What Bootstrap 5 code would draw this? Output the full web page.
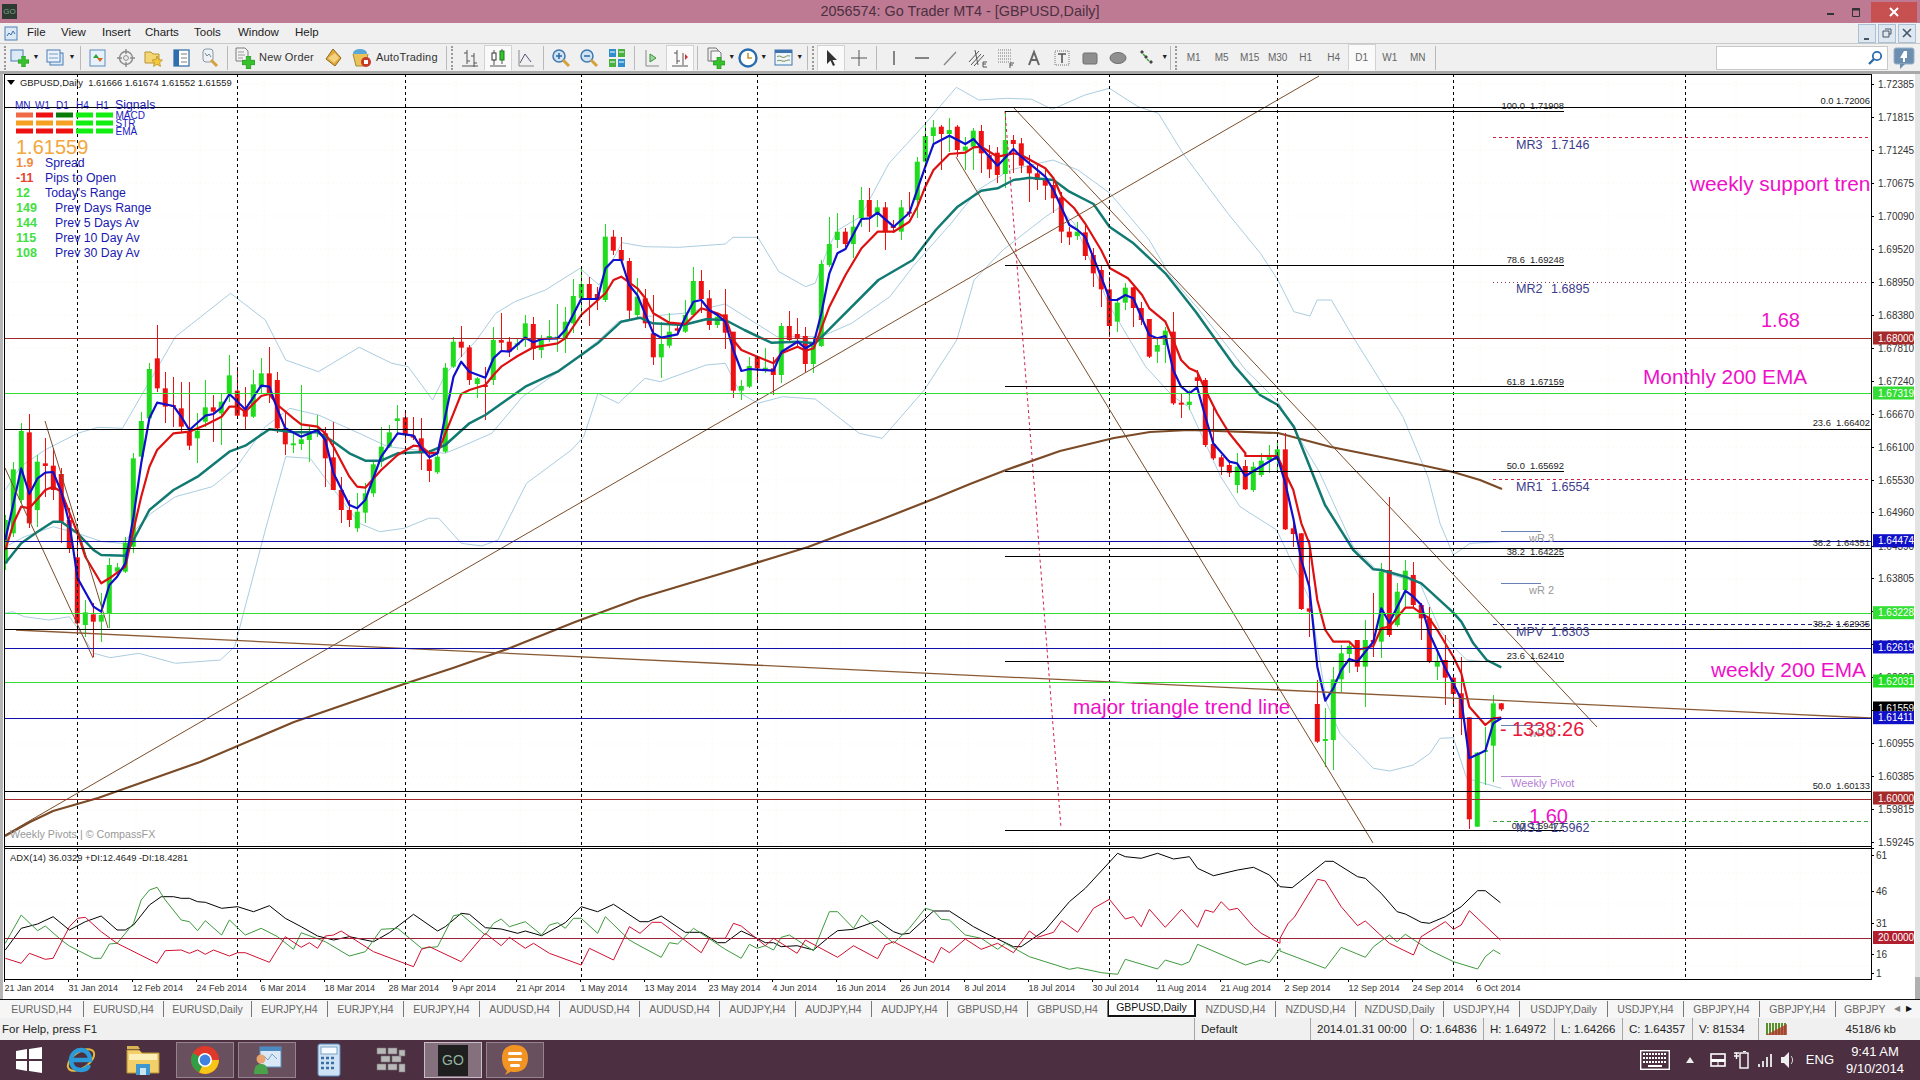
<!DOCTYPE html>
<html lang="en">
<head>
<meta charset="UTF-8">
<title>2056574: Go Trader MT4 - [GBPUSD,Daily]</title>
<link rel="stylesheet" href="https://cdn.jsdelivr.net/npm/bootstrap@5.3.0/dist/css/bootstrap.min.css">
<style>
body { width: 1920px; height: 1080px; overflow: hidden; font-family: "Liberation Sans", Arial, sans-serif; background: #f0f0f0; }
.titlebar { height: 23px; background: #bf7a93; color: #4a3040; font-size: 14.4px; }
.title-txt { padding-left: 84px; }
.app-ico { width: 15px; height: 15px; background: #2c3a32; color: #7fa08c; font-size: 8px; line-height: 15px; margin-left: 2px; }
.win-btn { width: 24px; height: 20px; }
.win-close { width: 46px; height: 20px; background: #c75050; margin: 0 3px 0 4px; }
.menubar { height: 21px; font-size: 11.5px; color: #222; background: #f0f0f0; border-bottom: 1px solid #c9c9c9; }
.m1 { width: 34px; } .m2 { width: 41px; } .m3 { width: 43px; } .m4 { width: 49px; } .m5 { width: 44px; } .m6 { width: 57px; }
.doc-btn { width: 18px; height: 19px; border: 1px solid #a9c0d6; background: #dfe8f0; margin-left: 2px; }
.toolbar { height: 30px; background: #f0f0f0; border-bottom: 3px solid #a8a8a8; font-size: 11px; color: #333; }
.tb { flex: 0 0 28px; height: 26px; }
.tb-on { background: #fafafa; border: 1px solid #d2d2d2; border-bottom-color: #fafafa; }
.ic22 { flex: 0 0 22px; height: 26px; }
.cr { flex: 0 0 10px; height: 26px; font-size: 7px; color: #222; }
.ml3 { margin-left: 3px; }
.mr1n { margin-right: -1px; }
.mr3n { margin-right: -3px; }
.sep { flex: 0 0 1px; height: 24px; background: #b9b9b9; margin: 0 3px; }
.grip { flex: 0 0 4px; height: 24px; margin: 0 1px; border-left: 2px dotted #9a9a9a; }
.tf { flex: 0 0 28px; font-size: 10px; color: #666; }
.tb-txt { flex: 0 0 auto; letter-spacing: .2px; }
.searchbox { width: 172px; height: 24px; background: #fff; border: 1px solid #c8c8c8; }
#chart { background: #fff; }
#chart text { white-space: pre; dominant-baseline: central; }
.lbl { font-size: 9.4px; fill: #222; }
.hdr { font-size: 9.4px; fill: #222; }
.axis { font-size: 10px; fill: #333; }
.dt { font-size: 9px; fill: #333; }
.tag { font-size: 10px; fill: #fff; }
.piv { font-size: 12.6px; fill: #3c3c8c; }
.wr { font-size: 11px; fill: #999; }
.wp { font-size: 10.7px; fill: #999; }
.plum { font-size: 11px; fill: #b57fd6; }
.pink { font-size: 20px; fill: #ee10c8; }
.pink-lg { font-size: 20.8px; fill: #ee10c8; }
.timer { font-size: 20px; fill: #e8193c; }
.price { font-size: 20px; fill: #f2a63c; }
.sig { font-size: 10px; fill: #1a1ac0; }
.info { font-size: 12.3px; fill: #1a1ab0; }
.num { font-size: 12.5px; font-weight: 700; }
.tabs { height: 19px; background: #f6f6f6; border-top: 1px solid #111; font-size: 10.5px; color: #666; overflow: hidden; }
.tab { height: 16px; line-height: 16px; margin-top: 1px; border-right: 1px solid #777; text-align: center; flex: 0 0 auto; }
.w76 { width: 76px; } .w80 { width: 80px; } .w88 { width: 88px; } .w84 { width: 84px; }
.tab-on { background: #fff; color: #111; height: 18px; line-height: 16px; margin-top: -1px; border: 1px solid #111; border-top: 0; border-bottom-width: 2px; border-right-width: 2px; }
.tab-more { width: 32px; font-size: 8px; color: #111; }
.statusbar { height: 22px; font-size: 11.5px; color: #222; background: #f0f0f0; }
.st { height: 22px; line-height: 22px; border-left: 1px solid #a5a5a5; padding-left: 6px; flex: 0 0 auto; }
.st-help { width: 1194px; padding-left: 2px; }
.s116 { width: 116px; } .s103 { width: 103px; } .s70 { width: 70px; } .s71 { width: 71px; } .s68 { width: 68px; } .s66 { width: 66px; } .s162 { width: 162px; }
.taskbar { height: 40px; background: #4c2f40; color: #fff; }
.tk { flex: 0 0 58px; height: 36px; margin-right: 4px; }
.tk-start { flex: 0 0 48px; margin-right: 4px; }
.tk-run { background: rgba(255,255,255,.16); border: 1px solid rgba(255,255,255,.3); }
.tk-cur { background: rgba(255,255,255,.32); border: 1px solid rgba(255,255,255,.55); }
.tray { font-size: 13px; }
.eng { margin: 0 6px 0 12px; }
.clock { width: 70px; font-size: 13px; line-height: 17px; margin-right: 10px; }
.go-ico { width: 30px; height: 31px; background: #1f1f1f; color: #8fb5a0; font-size: 14px; line-height: 31px; }
</style>
</head>
<body class="d-flex flex-column">

<svg width="0" height="0" class="d-block">
  <symbol id="plus" viewBox="0 0 12 12"><path d="M4 0h4v4h4v4H8v4H4V8H0V4h4z" fill="#35c22c" stroke="#1d8a1a" stroke-width=".6"/></symbol>
  <symbol id="mag" viewBox="0 0 20 20"><circle cx="8" cy="8" r="6" fill="#cfe3f5" stroke="#3f78b0" stroke-width="1.5"/><path d="M12 12l6 6" stroke="#d3a23a" stroke-width="3"/></symbol>
</svg>

<div class="titlebar d-flex align-items-center flex-shrink-0">
  <div class="app-ico text-center">GO</div>
  <div class="title-txt flex-grow-1 text-center">2056574: Go Trader MT4 - [GBPUSD,Daily]</div>
  <div class="win-btn d-flex align-items-center justify-content-center"><svg width="10" height="10"><rect x="1" y="6" width="7" height="2" fill="#333"/></svg></div>
  <div class="win-btn d-flex align-items-center justify-content-center"><svg width="12" height="12"><path d="M3.5 2.5h7v8h-7z M1.5 1" fill="none" stroke="#333"/><path d="M3 3.5h8" stroke="#333" stroke-width="2"/></svg></div>
  <div class="win-close d-flex align-items-center justify-content-center"><svg width="10" height="10"><path d="M1 1l8 8M9 1l-8 8" stroke="#fff" stroke-width="2"/></svg></div>
</div>

<div class="menubar d-flex align-items-center flex-shrink-0">
  <svg class="ms-1 me-2" width="15" height="17" viewBox="1 0 15 17"><rect x="2" y="2" width="12" height="13" fill="#dbe9f7" stroke="#4f7fb5"/><path d="M4 11l2-3 2 2 2-4 2 3" fill="none" stroke="#3a6ea5"/></svg>
  <span class="m1">File</span><span class="m2">View</span><span class="m3">Insert</span><span class="m4">Charts</span><span class="m5">Tools</span><span class="m6">Window</span><span>Help</span>
  <div class="ms-auto d-flex me-1">
    <div class="doc-btn d-flex align-items-end justify-content-center"><svg width="8" height="8"><rect x="1" y="4" width="5" height="2" fill="#456"/></svg></div>
    <div class="doc-btn d-flex align-items-center justify-content-center"><svg width="10" height="10"><path d="M3 1h6v5H7M1 3h6v6H1z" fill="none" stroke="#456"/></svg></div>
    <div class="doc-btn d-flex align-items-center justify-content-center"><svg width="10" height="10"><path d="M1 1l8 8M9 1l-8 8" stroke="#456" stroke-width="1.6"/></svg></div>
  </div>
</div>

<div class="toolbar d-flex align-items-center flex-shrink-0">
  <span class="grip ms-1"></span>
  <div class="ic22 d-flex align-items-center justify-content-center"><svg width="20" height="20" viewBox="0 0 20 20"><rect x="1" y="2" width="12" height="11" fill="#dceaf8" stroke="#4b7db3"/><use href="#plus" x="8" y="8" width="11" height="11"/></svg></div>
  <div class="cr d-flex align-items-center justify-content-center">▼</div>
  <div class="ic22 ms-1 d-flex align-items-center justify-content-center"><svg width="20" height="20" viewBox="0 0 20 20"><rect x="4" y="5" width="13" height="12" fill="#dceaf8" stroke="#4b7db3"/><rect x="1" y="2" width="13" height="12" fill="#eaf3fb" stroke="#4b7db3"/><path d="M3 6h9M3 10h9" stroke="#7a9cc0"/></svg></div>
  <div class="cr d-flex align-items-center justify-content-center">▼</div>
  <span class="sep"></span>
  <div class="tb d-flex align-items-center justify-content-center"><svg width="20" height="20" viewBox="0 0 20 20"><rect x="2" y="2" width="15" height="16" fill="#e6f1fb" stroke="#5a8cbc"/><path d="M8 6l3 4H5z" fill="#2aa82a"/><path d="M12 14L9 10h6z" fill="#d9661f"/></svg></div>
  <div class="tb d-flex align-items-center justify-content-center"><svg width="20" height="20" viewBox="0 0 20 20"><circle cx="10" cy="10" r="6.5" fill="none" stroke="#8a8a8a" stroke-width="1.4"/><circle cx="10" cy="10" r="2.4" fill="none" stroke="#8a8a8a"/><path d="M10 1v5M10 14v5M1 10h5M14 10h5" stroke="#8a8a8a" stroke-width="1.4"/></svg></div>
  <div class="tb d-flex align-items-center justify-content-center"><svg width="20" height="20" viewBox="0 0 20 20"><path d="M1 4h6l2 2h6v9H1z" fill="#f4d675" stroke="#b99331"/><path d="M13 8l1.7 3.6 3.8.4-2.8 2.6.8 3.8-3.5-2-3.5 2 .8-3.8L8 12l3.8-.4z" fill="#f2c83c" stroke="#b98a1c" stroke-width=".7"/></svg></div>
  <div class="tb d-flex align-items-center justify-content-center"><svg width="20" height="20" viewBox="0 0 20 20"><rect x="2" y="2" width="15" height="16" fill="#fff" stroke="#3e74ad" stroke-width="1.3"/><rect x="2" y="2" width="5" height="16" fill="#2f6fb0"/><path d="M9 6h6M9 10h6M9 14h6" stroke="#7d7d7d"/></svg></div>
  <div class="tb d-flex align-items-center justify-content-center"><svg width="20" height="20" viewBox="0 0 20 20"><rect x="3" y="1" width="10" height="13" rx="3" fill="#eef2f6" stroke="#8a97a5"/><path d="M5 5l2 3 2-2 2 3" fill="none" stroke="#7d8a98"/><path d="M11 12l6 6" stroke="#d3a23a" stroke-width="3"/></svg></div>
  <span class="sep"></span>
  <div class="tb d-flex align-items-center justify-content-center"><svg width="22" height="22" viewBox="0 0 22 22"><path d="M2 1h9l3 3v10H2z" fill="#f2f2f2" stroke="#7c7c7c"/><path d="M4 5h6M4 8h7M4 11h5" stroke="#999"/><use href="#plus" x="8" y="9" width="13" height="13"/></svg></div>
  <span class="tb-txt me-2">New Order</span>
  <div class="ic22 d-flex align-items-center justify-content-center"><svg width="20" height="20" viewBox="0 0 20 20"><path d="M10 1l8 9-6 8-9-7z" fill="#e3a93b" stroke="#8d6a22"/><path d="M5 10l7-5 4 5-5 5z" fill="#f4d27f"/></svg></div>
  <div class="tb ms-1 d-flex align-items-center justify-content-center"><svg width="22" height="22" viewBox="0 0 22 22"><ellipse cx="9" cy="6" rx="7" ry="4" fill="#5aa7d8"/><path d="M2 7l3 12h9l3-12" fill="#e9c25a" stroke="#a9883b"/><circle cx="15" cy="15" r="5" fill="#c83a26"/><rect x="13" y="13" width="4" height="4" fill="#fff"/></svg></div>
  <span class="tb-txt">AutoTrading</span>
  <span class="sep ms-2"></span><span class="grip"></span>
  <div class="tb d-flex align-items-center justify-content-center"><svg width="18" height="20" viewBox="0 0 18 20"><path d="M6 2v14M3 5h3M6 13h3M13 5v14M10 8h3M13 15h3M1 18h16" fill="none" stroke="#555"/></svg></div>
  <div class="tb tb-on d-flex align-items-center justify-content-center"><svg width="18" height="20" viewBox="0 0 18 20"><path d="M5 2v15M13 1v15" stroke="#555"/><rect x="3" y="5" width="4" height="7" fill="#fff" stroke="#333"/><rect x="11" y="3" width="4" height="9" fill="#39c232" stroke="#1a7a17"/><path d="M1 18h16" stroke="#555"/></svg></div>
  <div class="tb d-flex align-items-center justify-content-center"><svg width="18" height="20" viewBox="0 0 18 20"><path d="M2 2v16h15" fill="none" stroke="#888"/><path d="M3 15l5-9 6 8" fill="none" stroke="#557"/></svg></div>
  <span class="sep"></span>
  <div class="tb d-flex align-items-center justify-content-center"><svg width="20" height="20" viewBox="0 0 20 20"><use href="#mag" width="20" height="20"/><path d="M5 8h6M8 5v6" stroke="#2a6aa5" stroke-width="1.5"/></svg></div>
  <div class="tb d-flex align-items-center justify-content-center"><svg width="20" height="20" viewBox="0 0 20 20"><use href="#mag" width="20" height="20"/><path d="M5 8h6" stroke="#2a6aa5" stroke-width="1.5"/></svg></div>
  <div class="tb d-flex align-items-center justify-content-center"><svg width="18" height="20" viewBox="0 0 18 20"><rect x="1" y="1" width="7" height="8" fill="#2f8fce"/><rect x="10" y="1" width="7" height="8" fill="#49b13f"/><rect x="1" y="11" width="7" height="8" fill="#49b13f"/><rect x="10" y="11" width="7" height="8" fill="#2f8fce"/><path d="M2 4h5M11 4h5M2 14h5M11 14h5" stroke="#fff"/></svg></div>
  <span class="sep"></span>
  <div class="tb d-flex align-items-center justify-content-center"><svg width="18" height="20" viewBox="0 0 18 20"><path d="M3 2v16h13" fill="none" stroke="#888"/><path d="M7 6v8l6-4z" fill="#9dd89a" stroke="#3d8f3a"/></svg></div>
  <div class="tb tb-on d-flex align-items-center justify-content-center"><svg width="18" height="20" viewBox="0 0 18 20"><path d="M6 2v14M3 5h3M6 13h3M12 5v12M1 18h16" fill="none" stroke="#555"/><path d="M14 6l3 3-3 3z" fill="#c33"/></svg></div>
  <span class="sep"></span>
  <div class="ic22 ms-1 d-flex align-items-center justify-content-center"><svg width="20" height="22" viewBox="0 0 20 22"><path d="M2 1h8l2 2v11H2z" fill="#eee" stroke="#777"/><path d="M5 4h8l2 2v8H5z" fill="#f6f6f6" stroke="#777"/><use href="#plus" x="7" y="10" width="12" height="12"/></svg></div>
  <div class="cr d-flex align-items-center justify-content-center">▼</div>
  <div class="ic22 d-flex align-items-center justify-content-center"><svg width="20" height="20" viewBox="0 0 20 20"><circle cx="10" cy="10" r="8.5" fill="#fff" stroke="#2b6cae" stroke-width="2.4"/><path d="M10 5v5h4" fill="none" stroke="#c9962c" stroke-width="1.6"/></svg></div>
  <div class="cr d-flex align-items-center justify-content-center">▼</div>
  <div class="ic22 ms-1 ml3 d-flex align-items-center justify-content-center"><svg width="20" height="18" viewBox="0 0 20 18"><rect x="1" y="1" width="17" height="15" fill="#eef5fb" stroke="#3e74ad"/><rect x="1" y="1" width="17" height="3" fill="#3e74ad"/><path d="M3 8c3-3 5 2 8 0s3-1 5-1M3 12c3-2 5 1 8 0s3-1 5-1" fill="none" stroke="#7b8f52"/></svg></div>
  <div class="cr mr1n d-flex align-items-center justify-content-center">▼</div>
  <span class="sep"></span><span class="grip"></span>
  <div class="tb tb-on d-flex align-items-center justify-content-center"><svg width="14" height="18" viewBox="0 0 14 18"><path d="M3 1v14l3.500-3.500L9 17l2-1-2.500-5H13z" fill="#333"/></svg></div>
  <div class="tb d-flex align-items-center justify-content-center"><svg width="18" height="18" viewBox="0 0 18 18"><path d="M9 1v16M1 9h16" stroke="#555"/></svg></div>
  <span class="sep"></span>
  <div class="tb d-flex align-items-center justify-content-center"><svg width="18" height="18" viewBox="0 0 18 18"><path d="M9 2v14" stroke="#555" stroke-width="1.4"/></svg></div>
  <div class="tb d-flex align-items-center justify-content-center"><svg width="18" height="18" viewBox="0 0 18 18"><path d="M2 9h14" stroke="#555" stroke-width="1.4"/></svg></div>
  <div class="tb d-flex align-items-center justify-content-center"><svg width="18" height="18" viewBox="0 0 18 18"><path d="M3 16L15 3" stroke="#888" stroke-width="1.4"/></svg></div>
  <div class="tb d-flex align-items-center justify-content-center"><svg width="20" height="20" viewBox="0 0 20 20"><path d="M1 14L11 3M3 17L13 6M6 18L16 7M7 2l3 15" stroke="#555" fill="none"/><path d="M15 14h4M15 14v5M15 16h3M15 19h4" stroke="#555" fill="none"/></svg></div>
  <div class="tb d-flex align-items-center justify-content-center"><svg width="20" height="20" viewBox="0 0 20 20"><path d="M2 2h14M2 5h14M2 8h14M2 11h14M2 14h14" stroke="#777" stroke-dasharray="1 1"/><path d="M14 15h4M14 15v5M14 17h3" stroke="#555" fill="none"/></svg></div>
  <div class="tb d-flex align-items-center justify-content-center"><svg width="16" height="18" viewBox="0 0 16 18"><path d="M3 16L8 3l5 13M5 11h6" fill="none" stroke="#666" stroke-width="2"/></svg></div>
  <div class="tb d-flex align-items-center justify-content-center"><svg width="18" height="18" viewBox="0 0 18 18"><rect x="2" y="2" width="14" height="14" fill="none" stroke="#777" stroke-dasharray="1 1"/><path d="M5 5h8M9 5v9" stroke="#555" stroke-width="1.6"/></svg></div>
  <div class="tb d-flex align-items-center justify-content-center"><svg width="18" height="16" viewBox="0 0 18 16"><rect x="2" y="3" width="14" height="11" rx="1.500" fill="#8f8f8f" stroke="#6f6f6f"/></svg></div>
  <div class="tb d-flex align-items-center justify-content-center"><svg width="18" height="16" viewBox="0 0 18 16"><ellipse cx="9" cy="8" rx="8" ry="5.500" fill="#8f8f8f" stroke="#6f6f6f"/></svg></div>
  <div class="tb d-flex align-items-center justify-content-center"><svg width="18" height="18" viewBox="0 0 18 18"><path d="M5 1l2 2-2 2-2-2zM9 6l2 2-2 2-2-2zM14 11l2 2-2 2-2-2z" fill="#444"/><path d="M6 5l2 2M10 10l2 2" stroke="#2aa82a" stroke-width="1.500"/></svg></div>
  <div class="cr mr3n d-flex align-items-center justify-content-center">▼</div>
  <span class="sep"></span><span class="grip"></span>
  <div class="tf text-center">M1</div><div class="tf text-center">M5</div><div class="tf text-center">M15</div><div class="tf text-center">M30</div><div class="tf text-center">H1</div><div class="tf text-center">H4</div>
  <div class="tf tb-on h-100 d-flex align-items-center justify-content-center">D1</div>
  <div class="tf text-center">W1</div><div class="tf text-center">MN</div>
  <span class="sep"></span>
  <div class="ms-auto d-flex align-items-center">
    <div class="searchbox d-flex align-items-center justify-content-end pe-1"><svg width="16" height="16" viewBox="0 0 16 16"><circle cx="10" cy="6" r="4.200" fill="#fff" stroke="#2b6cae" stroke-width="1.800"/><path d="M7 9l-5 5" stroke="#2b6cae" stroke-width="2.400"/></svg></div>
    <div class="mx-1 d-flex"><svg width="24" height="24" viewBox="0 0 24 24"><rect x="2" y="2" width="20" height="16" rx="2" fill="#6c8fb0" stroke="#9ab3ca"/><path d="M8 18v5l5-5z" fill="#6c8fb0"/><path d="M12 5l-4 7h3v4h2v-4h2V5z" fill="#fff"/></svg></div>
  </div>
</div>

<svg id="chart" class="d-block flex-shrink-0" width="1920" height="925" viewBox="0 74 1920 925" xmlns="http://www.w3.org/2000/svg"></svg>

<div class="tabs d-flex flex-shrink-0 ps-0">
  <span class="tab w84">EURUSD,H4</span><span class="tab w80">EURUSD,H4</span><span class="tab w88">EURUSD,Daily</span><span class="tab w76">EURJPY,H4</span><span class="tab w76">EURJPY,H4</span><span class="tab w76">EURJPY,H4</span><span class="tab w80">AUDUSD,H4</span><span class="tab w80">AUDUSD,H4</span><span class="tab w80">AUDUSD,H4</span><span class="tab w76">AUDJPY,H4</span><span class="tab w76">AUDJPY,H4</span><span class="tab w76">AUDJPY,H4</span><span class="tab w80">GBPUSD,H4</span><span class="tab w80">GBPUSD,H4</span><span class="tab tab-on w88">GBPUSD,Daily</span><span class="tab w80">NZDUSD,H4</span><span class="tab w80">NZDUSD,H4</span><span class="tab w88">NZDUSD,Daily</span><span class="tab w76">USDJPY,H4</span><span class="tab w88">USDJPY,Daily</span><span class="tab w76">USDJPY,H4</span><span class="tab w76">GBPJPY,H4</span><span class="tab w76">GBPJPY,H4</span>
  <span class="tab border-0 w76 text-start ps-2 flex-shrink-1">GBPJPY</span>
  <span class="tab-more d-flex align-items-center justify-content-between ms-auto pe-2"><span class="opacity-50">◀</span><span>▶</span></span>
</div>

<div class="statusbar d-flex flex-shrink-0">
  <div class="st st-help border-0">For Help, press F1</div>
  <div class="st s116">Default</div>
  <div class="st s103">2014.01.31 00:00</div>
  <div class="st s70">O: 1.64836</div>
  <div class="st s71">H: 1.64972</div>
  <div class="st s68">L: 1.64266</div>
  <div class="st s70">C: 1.64357</div>
  <div class="st s66">V: 81534</div>
  <div class="st s162 d-flex align-items-center"><svg width="24" height="14" viewBox="0 0 24 14"><path d="M1 1h2v12H1zM4 1h2v12H4zM7 1h2v12H7zM10 1h2v12h-2zM13 1h2v12h-2zM16 1h2v12h-2zM19 1h2v12h-2z" fill="#5c8f2a"/><path d="M1 13L22 2v11z" fill="#b2332a" opacity=".75"/></svg><span class="ms-auto me-3 pe-2">4518/6 kb</span></div>
</div>

<div class="taskbar d-flex align-items-center flex-shrink-0">
  <div class="tk-start d-flex align-items-center justify-content-end pe-1"><svg width="30" height="28" viewBox="0 0 30 28"><path d="M2 5l11-2v10H2zM15 3l13-2v12H15zM2 15h11v10L2 23zM15 15h13v12l-13-2z" fill="#fff"/></svg></div>
  <div class="tk d-flex align-items-center justify-content-center"><svg width="34" height="34" viewBox="0 0 34 34"><ellipse cx="17" cy="17" rx="15" ry="8" transform="rotate(-35 17 17)" fill="none" stroke="#e5b73b" stroke-width="2"/><path d="M7 17h19c0-6-4-10-9-10s-10 4-10 10 4 10 10 10c4 0 7-2 8-5" fill="none" stroke="#2a9ad8" stroke-width="4.400"/></svg></div>
  <div class="tk d-flex align-items-center justify-content-center"><svg width="34" height="32" viewBox="0 0 34 32"><path d="M1 6h12l3 3h17v20H1z" fill="#f2cf69" stroke="#b5923a"/><path d="M1 2h11l2 3H1z" fill="#d9b455"/><rect x="3" y="10" width="28" height="6" fill="#fbeeb9"/><rect x="10" y="20" width="14" height="11" fill="#3f97cf"/><rect x="14" y="24" width="6" height="7" fill="#c8e4f5"/></svg></div>
  <div class="tk tk-run d-flex align-items-center justify-content-center"><svg width="30" height="30" viewBox="0 0 30 30"><circle cx="15" cy="15" r="14" fill="#e0392b"/><path d="M15 15L3 8A14 14 0 0 0 9 27.600z" fill="#2f9e44"/><path d="M15 15h14a14 14 0 0 1-20 12.600z" fill="#f5c518"/><circle cx="15" cy="15" r="7" fill="#fff"/><circle cx="15" cy="15" r="5.400" fill="#3f82e0"/></svg></div>
  <div class="tk tk-run d-flex align-items-center justify-content-center"><svg width="32" height="32" viewBox="0 0 32 32"><rect x="9" y="3" width="21" height="20" fill="#dbe9f6" stroke="#5b8fc0"/><rect x="9" y="3" width="21" height="4" fill="#4c8ac2"/><path d="M13 12l4 4 4-6 5 5" fill="none" stroke="#76a3cc"/><circle cx="10" cy="15" r="4.500" fill="#e9a36f"/><path d="M3 30c0-8 3-10 7-10s7 2 7 10z" fill="#4aa24a"/></svg></div>
  <div class="tk d-flex align-items-center justify-content-center"><svg width="24" height="34" viewBox="0 0 24 34"><rect x="1" y="1" width="22" height="32" rx="2" fill="#cfe2f3" stroke="#5d8ec0"/><rect x="4" y="4" width="16" height="7" fill="#f7fbff" stroke="#7da2c5"/><path d="M4 15h3M9 15h3M14 15h3M4 20h3M9 20h3M14 20h3M4 25h3M9 25h3M14 25h3" stroke="#3a6ea5" stroke-width="2.400"/></svg></div>
  <div class="tk d-flex align-items-center justify-content-center"><svg width="32" height="28" viewBox="0 0 32 28"><path d="M2 2h9v6H2zM13 2h9v6h-9zM24 4h6v6h-6zM6 10h9v6H6zM17 10h9v6h-9zM2 18h9v6H2zM13 18h9v6h-9zM24 18h6v8h-6z" fill="#b9b9b9" stroke="#777" stroke-width=".6"/></svg></div>
  <div class="tk tk-cur d-flex align-items-center justify-content-center"><div class="go-ico text-center">GO</div></div>
  <div class="tk tk-run d-flex align-items-center justify-content-center"><svg width="32" height="34" viewBox="0 0 32 34"><path d="M8 28c-3-3-5-7-5-13C3 6 8 2 16 2s13 4 13 13-5 14-13 14c-2 0-3 0-4-.5L6 32z" fill="#f29423"/><rect x="9" y="9" width="14" height="3" rx="1.500" fill="#fff"/><rect x="9" y="15" width="14" height="3" rx="1.500" fill="#fff"/><rect x="11" y="21" width="10" height="3" rx="1.500" fill="#fff"/></svg></div>
  <div class="ms-auto d-flex align-items-center tray">
    <svg class="me-3" width="30" height="20" viewBox="0 0 30 20"><rect x=".7" y=".7" width="28.600" height="18.600" fill="none" stroke="#fff" stroke-width="1.400"/><path d="M3 4h24M3 8h24M3 12h24" stroke="#fff" stroke-width="2" stroke-dasharray="2 1"/><path d="M8 16h14" stroke="#fff" stroke-width="2"/></svg>
    <svg class="me-3" width="8" height="6" viewBox="0 0 8 6"><path d="M4 0l4 6H0z" fill="#eee"/></svg>
    <svg class="me-2" width="16" height="14" viewBox="0 0 16 14"><rect x="1" y="1" width="14" height="12" fill="none" stroke="#fff" stroke-width="1.600"/><path d="M1 6h14v3H1z" fill="#fff"/><path d="M8 9v4" stroke="#fff"/></svg>
    <svg class="me-2" width="15" height="18" viewBox="0 0 15 18"><rect x="6" y="2" width="8" height="15" fill="none" stroke="#fff" stroke-width="1.400"/><path d="M0 2h5M2.500 2v6M0 5h5" stroke="#fff" stroke-width="1.400"/><path d="M9 0h3" stroke="#fff" stroke-width="2"/></svg>
    <svg class="me-2" width="15" height="14" viewBox="0 0 15 14"><path d="M1 11h2v3H1zM5 8h2v6H5zM9 4h2v10H9zM13 1h2v13h-2z" fill="#ddd"/></svg>
    <svg width="14" height="18" viewBox="0 0 14 18"><path d="M1 6h3l5-5v16l-5-5H1z" fill="#eee"/><path d="M11 5c2 2 2 6 0 8" fill="none" stroke="#ddd"/></svg>
    <span class="eng">ENG</span>
    <div class="clock text-center"><div>9:41 AM</div><div>9/10/2014</div></div>
  </div>
</div>

<script>
// chart is drawn from pixel coordinates read off the screen, y is page y
const svg = document.getElementById('chart');
const NS = 'http://www.w3.org/2000/svg';
const L = 4.5, R = 1871, TOP = 74, BOT = 979;

function el(tag, attrs, parent) {
  const e = document.createElementNS(NS, tag);
  for (const k in attrs) e.setAttribute(k, attrs[k]);
  (parent || svg).appendChild(e);
  return e;
}
function txt(x, y, s, cls, fill, anchor) {
  const a = { x: x, y: y, class: cls };
  if (fill) a.fill = fill;
  if (anchor) a['text-anchor'] = anchor;
  el('text', a).textContent = s;
}
function hline(y, x1, x2, color, w, dash) {
  const a = { x1: x1, x2: x2, y1: y, y2: y, stroke: color, 'stroke-width': w || 1, 'shape-rendering': 'crispEdges' };
  if (dash) a['stroke-dasharray'] = dash;
  el('line', a);
}
function line(x1, y1, x2, y2, color, w, dash) {
  const a = { x1: x1, y1: y1, x2: x2, y2: y2, stroke: color, 'stroke-width': w || 1 };
  if (dash) a['stroke-dasharray'] = dash;
  el('line', a, clipped);
}

// zoom crop -> page coordinates
const z8 = p => [p[0] / 2.45, 270 + p[1] / 3];
const z11 = p => [400 + p[0] / 2.613, 200 + p[1] / 3];
const z2 = p => [640 + p[0] / 2.45, p[1] / 3];
const z9 = p => [960 + p[0] / 2.8, 80 + p[1] / 3];
const z10 = p => [1240 + p[0] / 3, 440 + p[1] / 3];
const a4 = p => [p[0] / 2.45, 800 + p[1] / 3];
const a5 = p => [640 + p[0] / 2.45, 800 + p[1] / 3];
const a6 = p => [1280 + p[0] / 2.45, 800 + p[1] / 3];

function pts(s, f) {
  const n = s.trim().split(/[\s,]+/).map(Number), out = [];
  for (let i = 0; i < n.length; i += 2) out.push(f([n[i], n[i + 1]]));
  return out;
}
function poly(list, color, w) {
  el('polyline', { points: list.map(p => p[0].toFixed(1) + ',' + p[1].toFixed(1)).join(' '), fill: 'none', stroke: color, 'stroke-width': w, 'stroke-linejoin': 'round' }, clipped);
}

const defs = el('defs', {});
const cp = el('clipPath', { id: 'plot' }, defs);
el('rect', { x: L, y: TOP, width: R - L, height: BOT - TOP }, cp);

// side strips
el('rect', { x: 0, y: 74, width: 3, height: 925, fill: '#b5b5b5' });
el('rect', { x: 1915, y: 74, width: 5, height: 925, fill: '#e4e4e4' });
el('rect', { x: 1915, y: 977, width: 5, height: 22, fill: '#b0b0b0' });

const clipped = el('g', { 'clip-path': 'url(#plot)' });

// faint grid
const ticksX = [];
for (let i = 0; i < 29; i++) ticksX.push(5 + 64 * i);
for (let y = 84; y < 845; y += 33) line(L, y, R, y, '#f6f1e2', 1, '1 3');
for (let y = 873; y < 979; y += 31) line(L, y, R, y, '#f6f1e2', 1, '1 3');
ticksX.forEach(x => line(x + 3, TOP, x + 3, BOT, '#f6f1e2', 1, '1 3'));

// candles: colour high bodyTop bodyBottom low, in crop y
const cdata = [
  [270, 0, `g 735 750 880 900;g 575 598 790 800;g 460 483 690 700;r 432 487 760 775;g 555 575 720 770;r 505 580 588 680;r 535 587 660 690;r 595 612 755 820;r 715 750 835 850;r 800 862 1060 1090;g 990 1027 1065 1100;r 1000 1033 1055 1160;g 970 1035 1055 1115;g 865 885 1030 1075;g 880 892 905 915;g 800 818 905 910;g 550 565 830 850;g 425 453 560 565;g 280 297 445 450;r 165 265 355 365;r 305 355 410 460;r 320 405 410 470;r 335 415 470 490;r 335 483 527 540;g 430 482 505 580;g 330 412 455 470;r 375 412 425 515;g 370 395 430 525;g 255 316 370 395;r 290 362 437 440;r 350 422 440 480;g 300 343 440 445;g 265 310 352 370;r 230 310 375 400;r 305 330 475 490;r 430 475 523 555;g 490 520 524 550;g 345 508 522 540;g 465 487 510 575;g 435 480 485 500;r 470 490 565 650;r 455 562 660 660;r 620 660 720 760;r 690 720 750 770;g 670 725 775 785;g 640 670 728 760;g 570 583 670 680;g 470 530 575 590;g 465 487 530 535;g 405 445 453 490;r 420 442 495 520;r 440 497 500 510;r 445 505 550 600;r 540 568 603 635;g 540 560 607 612;g 280 293 545 550;g 200 215 290 295;r 168 215 233 260;r 225 232 330 345;g 320 325 342 385;r 290 345 348 450;g 170 210 330 345;r 130 210 218 240;r 200 215 245 260;g 205 220 225 240;g 135 160 210 230;r 140 162 237 270;g 195 205 240 265;g 150 198 203 215`],
  [200, 69, `g 312 410 415 455;g 320 365 415 460;g 237 288 370 400;g 205 252 295 350;r 232 252 295 378;r 260 282 298 330;g 72 110 300 305;r 90 110 152 165;r 110 150 182 190;r 175 183 332 360;g 235 290 345 350;r 268 295 370 385;r 285 400 472 495;g 365 432 472 535;g 340 395 437 445;r 370 385 392 400;g 300 345 395 400;g 200 243 345 350;r 210 243 297 340;r 270 295 375 390;g 340 350 375 385;r 268 343 398 448;r 395 395 572 595;g 540 558 572 600;g 470 498 560 565;r 470 470 505 550;g 445 503 508 520;r 470 505 525 585;g 368 378 525 550;r 333 378 420 425;r 355 402 415 440;r 380 408 492 515;g 410 430 492 520;g 180 192 438 440;g 50 132 195 200;g 40 95 120 145;r 85 95 132 140;g 45 80 132 175`],
  [0, 107, `g 560 600 655 680;r 565 600 650 695;g 600 622 640 680;r 605 622 695 750;r 660 678 683 700;g 600 622 695 720;r 575 635 640 650;g 470 485 600 655;g 370 408 485 500;g 360 382 408 440;r 375 380 402 510;g 355 390 402 455;r 375 380 450 470;g 410 440 452 510;g 385 392 440 510;r 375 393 460 520;r 435 465 508 535;r 440 458 525 550;g 335 420 522 565;r 405 420 432 520;r 415 430 497 520;r 465 497 520 605;r 495 520 540 570;r 510 535 557 600;r 530 555 595 640;r 575 592 695 730;r 680 695 712 735;g 665 695 708 720;r 670 697 768 780`],
  [80, 136, `r 505 525 580 620;r 555 570 628 680;r 590 628 738 770;g 655 668 725 755;g 610 623 668 690;r 620 622 684 740;r 665 684 720 735;r 717 717 830 835;g 775 795 815 850;g 740 752 795 850;r 695 755 970 975;r 940 968 973 1015;g 930 965 975 990;r 870 892 903 930;r 895 900 1095 1100;r 975 1092 1135 1140;r 1125 1132 1160 1185;r 1140 1155 1178 1190;g 1120 1160 1215 1240`],
  [440, 155, `r 60 78 148 150;g 65 80 150 155;g 40 62 105 110;g 15 48 60 100;g 0 28 60 100;r -20 28 268 270;r 240 265 282 320;r 280 280 507 510;r 300 505 515 590;r 720 792 905 910;g 805 897 903 980;g 680 718 900 990;g 615 640 718 755;g 605 618 642 700;r 600 600 680 695;g 540 600 680 800;r 460 600 606 650;g 370 395 605 655;r 170 390 585 590;g 430 455 555 560;g 360 392 450 500;r 365 405 495 500;r 490 495 535 600;r 500 535 665 668;g 640 665 680 720;r 585 660 713 795;r 710 713 762 800;r 650 760 835 885;r 830 832 1138 1168;g 935 938 1160 1160;g 860 930 935 1035;g 765 790 917 1025;r 790 790 808 812`]
];

// bollinger bands first, under the candles
const bb = '#aacde0';
poly(pts('13 660 50 590 110 540 190 490 240 472 300 475 430 200 565 70 650 150 700 270 780 305 880 232 960 280 1000 290 1060 390', z8)
  .concat(pts('120 520 200 420 250 340 300 305 380 270 470 205 520 255 580 128 640 140 730 142 850 132 870 112 935 112 990 215 1060 260 1085 250 1120 140 1145 90', z11))
  .concat(pts('540 650 610 490 700 370 775 262 830 300 900 295 960 298 1010 328 1090 285 1150 265 1220 320 1270 340 1330 460 1440 640 1520 760', z2))
  .concat(pts('890 600 935 695 980 708 1000 660 1040 660 1100 770 1240 1010 1310 1190', z9))
  .concat(pts('600 250 640 345 690 310 784 305', z10)), bb, 1);
poly(pts('13 830 60 800 130 770 190 790 250 815 300 820 370 730 430 680 520 650 580 590 650 470 710 415 780 435 880 490 950 530 1090 550', z8)
  .concat(pts('160 740 240 700 320 590 420 510 520 420 570 365 640 350 740 340 850 312 930 370 985 410 1100 410 1180 370 1280 290 1340 200 1440 70', z11))
  .concat(pts('50 330 140 270 260 240 330 270 420 340 530 480 590 590 670 690 800 870 890 965', z9))
  .concat(pts('240 100 340 320 410 390 440 400 540 430 600 570 640 620 680 660 740 665', z10)), bb, 1);
poly(pts('13 1030 30 1025 60 1040 120 1050 170 1040 190 1075 230 1150 270 1163 340 1150 430 1180 540 1170 575 1130 650 780 700 560 760 565 880 760 930 785 990 775 1050 745 1075 745 1130 820 1180 828 1220 810 1290 640 1400 540 1430 500 1465 370 1515 400', z8)
  .concat(pts('640 535 680 545 800 495 850 490 890 580 935 610 1000 590 1085 597 1200 700 1260 715 1370 570 1455 420 1500 240', z11))
  .concat(pts('120 510 240 410 275 385 320 430 420 680 520 860 597 950 640 980 730 1190', z9))
  .concat(pts('0 200 110 270 210 480 260 790 300 880 400 985 450 993 520 975 570 940 600 895 640 893 680 1015 784 1045', z10)), bb, 1);

// 200 EMA
poly([[5, 836], [30, 822], [53, 811], [98, 798], [200, 762], [294, 722], [404, 684], [453, 668], [510, 648], [575, 622], [640, 598], [720, 574], [808, 547], [880, 520], [936, 498], [970, 484], [1006, 470], [1060, 451], [1114, 438], [1150, 432], [1189, 430], [1278, 433], [1331, 447], [1421, 465], [1453, 472], [1480, 480], [1502, 489]], '#7b4b27', 2.2);

// candles
const cg = el('g', {}, clipped);
cdata.forEach(seg => {
  seg[2].split(';').forEach((row, n) => {
    const r = row.trim().split(' ');
    const x = 5.3 + 8 * (seg[1] + n);
    const y = v => seg[0] + Number(v) / 3;
    const c = r[0] === 'g' ? '#1fdc1f' : '#ee1111';
    el('line', { x1: x, x2: x, y1: y(r[1]), y2: y(r[4]), stroke: c, 'stroke-width': 1, 'shape-rendering': 'crispEdges' }, cg);
    el('rect', { x: x - 2.5, y: y(r[2]), width: 5, height: Math.max(2, y(r[3]) - y(r[2])), fill: c }, cg);
  });
});

// moving averages
poly(pts('13 880 52 820 92 785 130 755 150 755 190 790 229 840 248 855 307 857 327 810 366 720 425 660 484 620 562 545 601 527 660 478 719 487 778 487 817 515 856 550 895 572 934 572 974 550 1052 545 1091 525 1150 460 1189 435 1287 350 1366 305 1424 255 1464 220 1522 155 1568 143', z8)
  .concat(pts('660 370 740 375 800 358 850 360 900 390 970 428 1040 425 1085 430 1150 355 1250 240 1340 180 1400 90', z11))
  .concat(pts('778 620 836 572 876 565 915 540 954 533 1013 540 1052 575 1111 612 1150 680 1209 730', z2))
  .concat(pts('575 580 660 695 710 770 770 860 840 945 890 975 935 1040', z9))
  .concat(pts('255 195 340 330 400 388 424 390 496 410 544 430 640 518 664 545 700 610 740 660 784 682', z10)), '#117a72', 2.5);
poly(pts('13 840 33 760 52 710 72 715 111 660 130 650 150 665 190 790 209 860 248 940 268 925 307 890 327 780 346 680 366 590 385 540 425 490 464 485 503 465 543 440 562 410 582 410 601 425 640 378 660 372 680 405 719 445 738 463 778 470 797 490 817 530 856 620 875 650 895 653 934 600 974 555 1013 527 1033 530 1052 550 1072 548 1111 430 1130 372 1150 360 1189 345 1209 315 1228 290 1268 258 1307 232 1366 220 1385 205 1424 135', z8)
  .concat(pts('537 280 558 240 578 230 620 265 641 295 662 340 704 368 746 372 787 325 829 340 850 352 871 420 892 450 934 470 976 490 997 460 1039 440 1060 452 1081 445 1101 385 1122 320 1164 225 1206 145 1248 95 1290 95 1331 65 1352 20', z11))
  .concat(pts('699 560 719 510 758 462 797 458 817 442 836 440 876 470 915 460 934 465 993 505 1013 535', z2))
  .concat(pts('285 350 320 385 350 430 395 510 420 565 470 595 510 645 530 685 575 725 597 780 619 840 642 865 664 875 687 930 720 1000 754 1060 799 1120', z9))
  .concat(pts('16 48 112 48 136 100 160 150 184 250 208 310 232 480 256 570 280 605 328 605 352 630 400 618 424 565 448 560 496 503 520 503 544 520 568 535 592 570 640 650 664 700 688 800 736 855 760 835 784 833', z10)), '#dd1111', 2.2);
poly(pts('13 810 52 595 72 672 92 625 111 608 130 606 150 665 170 760 190 925 229 1010 248 1025 268 945 287 920 307 880 327 740 346 580 366 445 385 398 425 408 444 440 464 480 503 437 523 432 543 412 562 372 601 418 640 347 660 350 680 420 699 475 738 500 778 480 797 510 817 610 856 705 875 715 895 690 934 560 954 525 974 490 1013 497 1033 535 1052 562 1072 550 1111 320 1130 275 1150 305 1189 323 1209 265 1228 243 1248 245 1287 203 1307 217 1327 207 1366 205 1385 180 1424 87', z8)
  .concat(pts('516 297 537 205 558 180 578 180 599 255 620 285 662 400 683 413 725 403 746 350 767 305 787 300 808 330 829 345 850 365 871 450 892 513 913 507 976 512 997 455 1039 425 1060 445 1081 430 1101 340 1122 220 1143 160 1164 147 1206 57 1227 55 1248 38 1290 80 1331 38', z11))
  .concat(pts('699 500 719 432 758 407 797 432 817 417 856 470 876 497 915 447 934 470 993 530 1013 570 1052 675 1072 690', z2))
  .concat(pts('350 470 395 590 420 660 440 660 463 645 485 655 530 765 552 775 575 768 597 870 619 920 642 940 664 922 687 1010 709 1090 754 1145 776 1150', z9))
  .concat(pts('16 108 112 50 136 130 160 235 184 360 208 440 232 680 256 782 280 745 304 690 328 657 352 665 400 605 424 505 448 548 496 452 520 470 544 495 568 580 616 685 640 730 664 780 688 955 736 932 760 850 784 835', z10)), '#1010cc', 2.2);

// dashed periods
[77.5, 237.5, 405.5, 581, 757.5, 925, 1109.5, 1277.5, 1453.5, 1685].forEach(x => {
  el('line', { x1: x, x2: x, y1: TOP, y2: BOT, stroke: '#000', 'stroke-width': 1, 'stroke-dasharray': '3 3', 'shape-rendering': 'crispEdges' }, clipped);
});

// trend lines
const tr = '#7a4e2c';
line(5, 835, 1319, 76, tr, 1);
line(1013, 107, 1597, 727, tr, 1);
line(956, 157, 1373, 843, tr, 1);
line(5, 468, 93, 658, tr, 1);
line(45, 421, 108, 628, tr, 1);
line(16, 630, 1871, 718, '#8a5a34', 1.3);
line(1005, 111, 1061, 828, '#d0204a', 1, '3 3');

// horizontal levels
[[107, '#000'], [338, '#a02a2a'], [393, '#33dd33'], [429, '#000'], [541.5, '#1010a8'], [548.5, '#000'], [613, '#33dd33'], [629.5, '#000'], [648.5, '#1010a8'], [682.5, '#33dd33'], [718.5, '#1010a8'], [791.5, '#000'], [799.5, '#a02a2a']].forEach(h => hline(h[0], L, R, h[1], 1));
[111, 265.5, 386, 471.5, 556.5, 661.5, 830.5].forEach(y => hline(y, 1005, 1564, '#000', 1));
hline(137.5, 1493, 1869, '#d0204a', 1, '3 3');
hline(282.5, 1493, 1869, '#8a3a5a', 1, '1 3');
hline(479.5, 1493, 1869, '#d0204a', 1, '3 3');
hline(624.5, 1493, 1869, '#1a1a80', 1, '4 3');
hline(821.5, 1493, 1869, '#3aa03a', 1, '4 3');
hline(938.5, L, R, '#9b2335', 1);
[531.5, 583.5, 725.5].forEach(y => hline(y, 1501, 1541, '#6a7fb5', 1));
hline(776.5, 1501, 1541, '#b78fd0', 1);

// ADX window
poly(pts('13 450 52 385 92 372 130 350 170 390 209 365 248 348 287 390 307 390 327 375 366 315 395 290 425 290 444 295 464 295 484 305 503 307 543 325 582 320 621 335 660 317 699 355 738 380 778 408 817 420 856 410 915 425 954 398 1013 343 1072 393 1091 380 1130 340 1150 343 1189 383 1228 387 1268 400 1287 393 1327 407 1385 368 1424 320 1464 335 1503 313', a4)
  .concat(pts('0 365 20 365 52 348 111 397 150 397 190 428 209 428 248 393 287 415 307 428 327 428 346 440 385 437 425 450 464 410 484 392 523 388 582 362 621 395 640 403 660 400 719 333 758 333 817 380 856 405 915 440 934 440 993 390 1052 305 1091 265 1170 160 1189 170 1228 175 1268 160 1307 177 1346 170 1366 205 1405 227 1464 210 1503 202 1542 225 1568 260', a5))
  .concat(pts('30 263 111 184 130 184 190 230 209 235 248 280 287 335 307 342 346 367 366 370 405 350 444 320 484 272 503 272 540 308', a6)), '#000', 1);
poly(pts('13 430 52 345 92 392 111 378 150 420 170 438 229 475 248 475 268 432 287 430 327 370 346 300 366 270 385 262 405 300 444 360 464 365 484 392 503 362 543 405 562 360 601 405 640 385 680 410 719 448 738 398 797 425 856 468 895 455 934 388 974 385 1033 445 1072 440 1111 347 1130 343 1189 405 1209 370 1228 357 1248 380 1287 365 1327 405 1346 375 1366 368 1385 385 1405 355 1424 355 1464 400 1483 350 1542 420', a4)
  .concat(pts('0 438 52 472 72 428 92 432 131 385 209 448 248 475 268 433 287 445 307 437 327 450 346 412 366 405 425 452 464 335 484 335 523 385 543 345 621 430 660 385 699 325 719 332 738 358 758 360 797 405 836 415 876 448 895 430 954 470 1052 508 1072 503 1131 518 1170 523 1189 478 1268 507 1287 480 1327 495 1346 485 1366 433 1484 495 1522 480 1542 488 1568 445', a5))
  .concat(pts('0 453 111 505 150 442 209 472 229 440 268 405 287 425 307 403 366 450 425 485 484 507 503 470 523 450 540 462', a6)), '#3d9a3d', 1);
poly(pts('13 475 52 490 72 460 111 478 130 475 170 380 190 355 209 352 248 395 287 430 385 490 405 452 444 450 464 460 484 450 503 463 523 450 562 468 582 458 601 458 660 487 699 410 738 442 758 428 778 445 797 408 817 405 836 393 915 455 1013 500 1033 448 1052 440 1130 485 1189 400 1228 437 1248 412 1287 445 1307 430 1346 460 1424 495 1444 445 1503 480 1542 380', a4)
  .concat(pts('0 400 30 367 52 367 150 458 170 415 209 415 229 370 248 378 307 437 327 415 385 460 405 420 484 472 523 437 582 476 601 435 621 425 719 488 738 442 758 458 797 417 836 448 876 430 915 458 954 393 974 412 1013 397 1033 362 1072 397 1111 325 1150 298 1189 357 1209 350 1228 380 1248 328 1287 382 1327 328 1366 382 1385 330 1405 337 1424 305 1444 330 1464 325 1503 380 1522 400 1568 430', a5))
  .concat(pts('0 415 20 370 35 352 92 238 111 243 150 320 190 377 209 363 268 430 327 465 346 410 405 365 425 388 444 375 464 332 540 420', a6)), '#d01030', 1);

// frame
el('rect', { x: L, y: TOP, width: R - L, height: BOT - TOP, fill: 'none', stroke: '#000', 'stroke-width': 1, 'shape-rendering': 'crispEdges' });
hline(846.5, L, R, '#000', 1);
hline(848.5, L, R + 3, '#000', 1);

// right axis
[[84, '1.72385'], [117, '1.71815'], [150, '1.71245'], [183, '1.70675'], [216, '1.70090'], [249, '1.69520'], [282, '1.68950'], [315, '1.68380'], [348, '1.67810'], [381, '1.67240'], [414, '1.66670'], [447, '1.66100'], [480, '1.65530'], [512.5, '1.64960'], [546, '1.64390'], [578.5, '1.63805'], [611, '1.63235'], [644, '1.62665'], [677, '1.62095'], [710, '1.61525'], [743.5, '1.60955'], [776.5, '1.60385'], [809.5, '1.59815'], [842.5, '1.59245']].forEach(a => {
  hline(a[0], R, R + 3, '#000', 1);
  txt(1878, a[0], a[1], 'axis');
});
[[855, '61'], [891, '46'], [923, '31'], [954, '16'], [973, '1']].forEach(a => {
  hline(a[0], R, R + 3, '#000', 1);
  txt(1876, a[0], a[1], 'axis');
});
[[338, '1.68000', '#a52a2a'], [393, '1.67319', '#33dd33'], [540.7, '1.64474', '#1010c8'], [612.7, '1.63228', '#33e033'], [647, '1.62619', '#1010c8'], [681, '1.62031', '#22dd22'], [708, '1.61559', '#000'], [717.7, '1.61411', '#1010c8'], [798, '1.60000', '#a52a2a'], [937.5, '20.0000', '#b2202f']].forEach(t => {
  el('rect', { x: 1873, y: t[0] - 6.5, width: 41, height: 13, fill: t[2] });
  txt(1878, t[0], t[1], 'tag');
});

// date axis
['21 Jan 2014', '31 Jan 2014', '12 Feb 2014', '24 Feb 2014', '6 Mar 2014', '18 Mar 2014', '28 Mar 2014', '9 Apr 2014', '21 Apr 2014', '1 May 2014', '13 May 2014', '23 May 2014', '4 Jun 2014', '16 Jun 2014', '26 Jun 2014', '8 Jul 2014', '18 Jul 2014', '30 Jul 2014', '11 Aug 2014', '21 Aug 2014', '2 Sep 2014', '12 Sep 2014', '24 Sep 2014', '6 Oct 2014'].forEach((d, i) => {
  const x = 4.5 + 64 * i;
  el('line', { x1: x, x2: x, y1: BOT, y2: BOT + 3, stroke: '#000', 'shape-rendering': 'crispEdges' });
  txt(x, 988, d, 'dt');
});

// fibonacci labels
[[105, '100.0  1.71908'], [259.7, '78.6  1.69248'], [381, '61.8  1.67159'], [465.7, '50.0  1.65692'], [551, '38.2  1.64225'], [655.7, '23.6  1.62410'], [825, '0.0  1.59477']].forEach(a => txt(1564, a[0], a[1], 'lbl', null, 'end'));
[[100.7, '0.0 1.72006'], [422.5, '23.6  1.66402'], [542, '38.2  1.64351'], [623.7, '38.2  1.62935'], [785.7, '50.0  1.60133']].forEach(a => txt(1870, a[0], a[1], 'lbl', null, 'end'));

// pivots
[[145, 'MR3', '1.7146'], [289, 'MR2', '1.6895'], [486.7, 'MR1', '1.6554'], [631.7, 'MPV', '1.6303'], [828, 'MS1', '1.5962']].forEach(a => {
  txt(1516, a[0], a[1], 'piv');
  txt(1551, a[0], a[2], 'piv');
});
txt(1529, 538, 'wR 3', 'wr');
txt(1529, 590, 'wR 2', 'wr');
txt(1529, 733, 'wR 1', 'wr');
txt(1511, 783, 'Weekly Pivot', 'plum');

// hand placed notes
txt(1690, 183, 'weekly support tren', 'pink-lg');
txt(1761, 320, '1.68', 'pink');
txt(1643, 376, 'Monthly 200 EMA', 'pink-lg');
txt(1711, 669, 'weekly 200 EMA', 'pink-lg');
txt(1073, 706.5, 'major triangle trend line', 'pink-lg');
txt(1529, 816, '1.60', 'pink');
txt(1500, 729, '-', 'timer');
txt(1512, 729, '1338:26', 'timer');

// top-left panel
el('path', { d: 'M7 80h8l-4 5z', fill: '#000' });
txt(20, 82.7, 'GBPUSD,Daily  1.61666 1.61674 1.61552 1.61559', 'hdr');
[['MN', 15], ['W1', 35], ['D1', 56], ['H4', 76], ['H1', 96]].forEach(a => txt(a[1], 105, a[0], 'sig'));
txt(115, 105, 'Signals', 'info');
const rows = [[115, ['#f06a45', '#ee1111', '#0a7a0a', '#11ee11', '#11ee11'], 'MACD'], [123, ['#f5a020', '#f5a020', '#f5a020', '#11ee11', '#11ee11'], 'STR'], [131, ['#ee1111', '#ee1111', '#ee1111', '#11ee11', '#11ee11'], 'EMA']];
rows.forEach(r => {
  r[1].forEach((c, i) => el('rect', { x: 16 + 20 * i, y: r[0] - 2.5, width: 17, height: 5, fill: c }));
  txt(115.5, r[0], r[2], 'sig');
});
txt(16, 146.7, '1.61559', 'price');
[[162.7, '1.9', '#f08a3c', 45, 'Spread'], [178, '-11', '#e8432c', 45, 'Pips to Open'], [193, '12', '#3fe03f', 45, "Today's Range"], [208, '149', '#3fe03f', 55, 'Prev Days Range'], [223, '144', '#3fe03f', 55, 'Prev 5 Days Av'], [238, '115', '#3fe03f', 55, 'Prev 10 Day Av'], [253, '108', '#3fe03f', 55, 'Prev 30 Day Av']].forEach(a => {
  txt(16, a[0], a[1], 'num', a[2]);
  txt(a[3], a[0], a[4], 'info');
});
txt(10, 834, 'Weekly Pivots | © CompassFX', 'wp');
txt(10, 857.7, 'ADX(14) 36.0329 +DI:12.4649 -DI:18.4281', 'hdr');
</script>
<script src="https://cdn.jsdelivr.net/npm/bootstrap@5.3.0/dist/js/bootstrap.bundle.min.js"></script>
</body>
</html>
